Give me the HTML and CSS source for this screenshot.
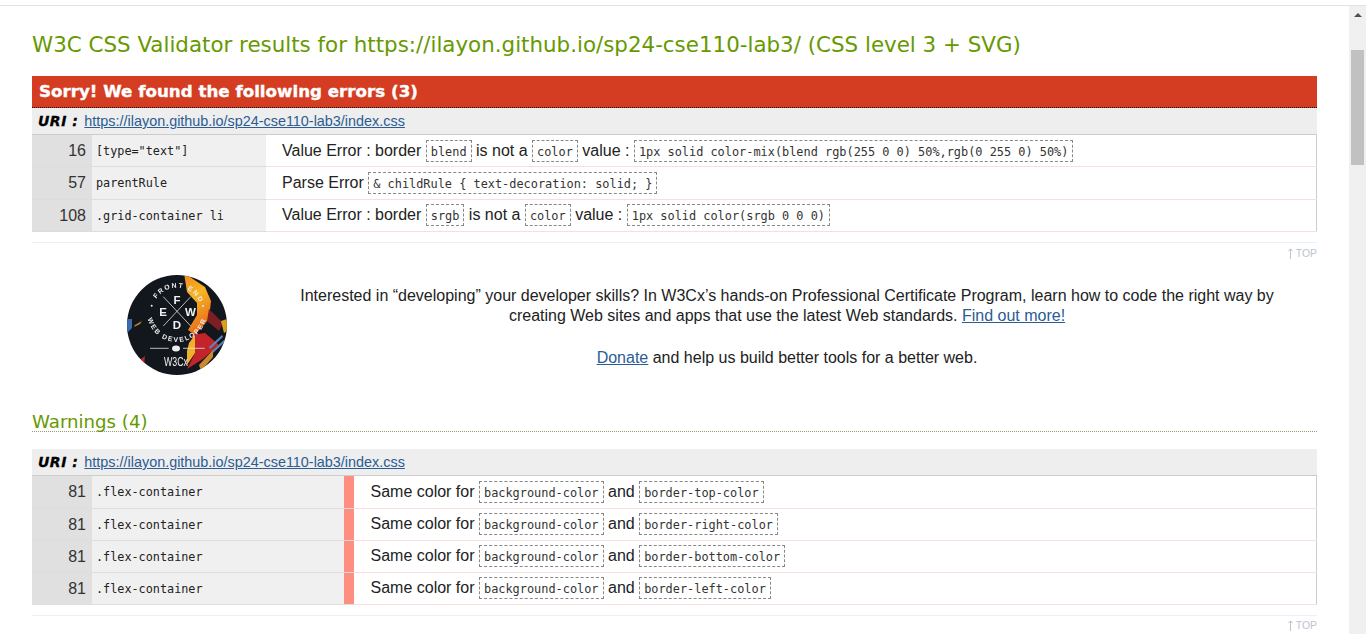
FILE: index.html
```html
<!DOCTYPE html>
<html lang="en">
<head>
<meta charset="utf-8">
<title>W3C CSS Validator results</title>
<link rel="stylesheet" href="styles.css">
</head>
<body>
<div class="topline"></div>
<main class="page">
  <h2 class="title">W3C CSS Validator results for https://ilayon.github.io/sp24-cse110-lab3/ (CSS level 3 + SVG)</h2>
  <h3 class="errbar">Sorry! We found the following errors (3)</h3>
  <div class="uri"><span class="urilabel">URI :</span> <a href="#">https://ilayon.github.io/sp24-cse110-lab3/index.css</a></div>
  <table class="report errors">
    <tr class="r1"><td class="ln">16</td><td class="ctx">[type="text"]</td><td class="msg">Value Error : border <code>blend</code> is not a <code>color</code> value : <code>1px solid color-mix(blend rgb(255 0 0) 50%,rgb(0 255 0) 50%)</code></td></tr>
    <tr class="r2"><td class="ln">57</td><td class="ctx">parentRule</td><td class="msg">Parse Error <code>&amp; childRule { text-decoration: solid; }</code></td></tr>
    <tr class="r3"><td class="ln">108</td><td class="ctx">.grid-container li</td><td class="msg">Value Error : border <code>srgb</code> is not a <code>color</code> value : <code>1px solid color(srgb 0 0 0)</code></td></tr>
  </table>
  <div class="toprule"></div>
  <div class="toplink"><svg class="arrow" viewBox="0 0 5 11" width="5" height="11"><path d="M2.5 11V1M.5 3.2 2.5 .8 4.5 3.2" fill="none" stroke="#b5c5d3" stroke-width="1"/></svg> TOP</div>
  <section class="promo">
    <svg class="logo" viewBox="0 0 100 100" width="100" height="100" aria-label="W3Cx Front End Web Developer">
      <defs>
        <clipPath id="disc"><circle cx="50" cy="50" r="50"/></clipPath>
        <linearGradient id="band" x1="0" y1="0" x2="0.3" y2="1">
          <stop offset="0" stop-color="#f08a1e"/>
          <stop offset=".45" stop-color="#f7b523"/>
          <stop offset="1" stop-color="#ea6d1c"/>
        </linearGradient>
      </defs>
      <g clip-path="url(#disc)">
        <rect width="100" height="100" fill="#12161d"/>
        <polygon points="57,-2 78,12 84,26 82,44 68,60 61,55 70,40 70,28 60,17" fill="url(#band)"/>
        <polygon points="82,34 96,48 92,56 80,46" fill="#7d1f22"/>
        <polygon points="65,60 78,58 92,70 76,84 60,94 68,78" fill="#c3232a"/>
        <polygon points="62,68 68,60 68,78 60,90 60,76" fill="#f2b02a"/>
        <polygon points="82,72 95,60 96,62 83,74" fill="#5a86b5"/>
        <polygon points="85,76 98,64 99,66 86,78" fill="#5a86b5"/>
        <polygon points="72,90 86,75 86,82 74,96" fill="#c98a2b"/>
        <polygon points="0,44 5,44 5,53 0,58" fill="#3c6cab"/>
        <polygon points="8,50 15,46 13,49 7,52" fill="#c98a2b"/>
        <polygon points="14,84 18,81 17,90" fill="#c3232a"/>
        <polygon points="94,46 100,44 100,56 97,58" fill="#d8a01f"/>
      </g>
      <g fill="none" stroke="#e4e4e4" stroke-width=".8">
        <path d="M36.3 21.7 63.7 51"/><path d="M63.7 21.7 36.3 51"/>
        <path d="M23 73.3H41.7"/><path d="M56 73.3H77.7"/>
      </g>
      <ellipse cx="49" cy="73.6" rx="4" ry="3" fill="#eee"/>
      <g class="lg-big">
        <text x="50" y="28.5" text-anchor="middle">F</text>
        <text x="36" y="41" text-anchor="middle">E</text>
        <text x="63.5" y="41" text-anchor="middle">W</text>
        <text x="50" y="54" text-anchor="middle">D</text>
      </g>
      <circle cx="24.7" cy="30.7" r="1" fill="#eee"/>
      <circle cx="76" cy="31" r="1" fill="#eee"/>
      <path id="arcTop" d="M26 42A24.5 24.5 0 1 1 74 42" fill="none"/>
      <path id="arcBot" d="M20.6 31A30 30 0 1 0 79.4 31" fill="none"/>
      <text class="lg-arc"><textPath href="#arcTop" startOffset="53%" text-anchor="middle">FRONT END</textPath></text>
      <text class="lg-arc"><textPath href="#arcBot" startOffset="50%" text-anchor="middle">WEB DEVELOPER</textPath></text>
      <text class="lg-x" x="37" y="91" textLength="24" lengthAdjust="spacingAndGlyphs">W3Cx</text>
    </svg>
    <div class="promotext">
      <p>Interested in “developing” your developer skills? In W3Cx’s hands-on Professional Certificate Program, learn how to code the right way by creating Web sites and apps that use the latest Web standards. <a href="#">Find out more!</a></p>
      <p class="donate"><a href="#">Donate</a> and help us build better tools for a better web.</p>
    </div>
  </section>
  <h3 class="warnhead">Warnings (4)</h3>
  <div class="uri uri-w"><span class="urilabel">URI :</span> <a href="#">https://ilayon.github.io/sp24-cse110-lab3/index.css</a></div>
  <table class="report warnings">
    <tr><td class="ln">81</td><td class="ctx">.flex-container</td><td class="lvl"></td><td class="msg">Same color for <code>background-color</code> and <code>border-top-color</code></td></tr>
    <tr><td class="ln">81</td><td class="ctx">.flex-container</td><td class="lvl"></td><td class="msg">Same color for <code>background-color</code> and <code>border-right-color</code></td></tr>
    <tr><td class="ln">81</td><td class="ctx">.flex-container</td><td class="lvl"></td><td class="msg">Same color for <code>background-color</code> and <code>border-bottom-color</code></td></tr>
    <tr><td class="ln">81</td><td class="ctx">.flex-container</td><td class="lvl"></td><td class="msg">Same color for <code>background-color</code> and <code>border-left-color</code></td></tr>
  </table>
  <div class="toprule toprule-w"></div>
  <div class="toplink toplink-w"><svg class="arrow" viewBox="0 0 5 11" width="5" height="11"><path d="M2.5 11V1M.5 3.2 2.5 .8 4.5 3.2" fill="none" stroke="#b5c5d3" stroke-width="1"/></svg> TOP</div>
</main>
<div class="scrollbar"><span class="sb-up"></span><span class="sb-thumb"></span></div>
</body>
</html>
```
FILE: styles.css
```css
html, body { margin: 0; padding: 0; height: 634px; overflow: hidden; background: #fff; }
body { font-family: "Liberation Sans", Arial, sans-serif; font-size: 16px; color: #222; }
.topline { height: 1px; margin-top: 5px; background: #e3e3e3; }
.page { width: 1285px; margin-left: 32px; }
.title { margin: 0; padding-top: 24px; height: 46px; font: 400 21.4px/30px "DejaVu Sans", Verdana, sans-serif; color: #669900; white-space: nowrap; }
.errbar { margin: 0; height: 31px; padding-left: 7px; background: #d43d22; color: #fff; border-bottom: 1px dotted #111; font: 700 16.7px/31px "DejaVu Sans", Verdana, sans-serif; -webkit-text-stroke: .4px #fff; }
.uri { height: 26px; padding-left: 6px; background: #eee; line-height: 26px; font-size: 14.4px; color: #000; white-space: nowrap; }
.urilabel { font: italic 700 14px/26px "DejaVu Sans", Verdana, sans-serif; letter-spacing: .5px; margin-right: 2px; -webkit-text-stroke: .3px #000; }
a { color: #2b5c94; text-decoration: underline; }
.report { width: 1285px; border-collapse: collapse; table-layout: fixed; border-right: 1px solid #ccc; }
.report td { padding: 0; border-bottom: 1px solid #ffdcdc; white-space: nowrap; vertical-align: middle; }
.report td.ln, .report td.ctx, .report td.lvl { border-bottom-color: #ddd; }
.report tr:first-child td { border-top: 1px solid #ccc; }
.ln { width: 54px; padding-right: 6px !important; background: #e0e0e0; text-align: right; color: #333; font-size: 16px; }
.ctx { background: #f0f0f0; padding-left: 4px !important; font: 11.8px "DejaVu Sans Mono", "Liberation Mono", monospace; color: #222; }
.errors .ctx { width: 170px; }
.warnings .ctx { width: 248px; }
.msg { color: #222; line-height: 20px; }
.errors .msg { padding-left: 16px !important; }
.warnings .msg { padding-left: 16.5px !important; }
.lvl { width: 10px; background: #fd8e80 !important; }
.errors tr td { height: 31px; }
.errors tr.r2 td { height: 32px; }
.errors tr.r1 td.msg { height: 30px; padding-top: 1px; }
.errors tr.r3 td.msg { height: 30px; padding-bottom: 1px; }
.warnings tr td { height: 31px; }
.warnings tr:first-child td { height: 32px; }
.warnings tr td.msg { height: 30px; padding-bottom: 1px; }
.warnings tr:first-child td.msg { height: 31px; }
code { display: inline-block; height: 20px; padding: 0 4px; margin: 0; border: 1px dashed #888; font: 11.9px/22px "DejaVu Sans Mono", "Liberation Mono", monospace; color: #333; }
.toprule { height: 1px; margin-top: 10px; background: #eeeefa; }
.toplink { height: 17px; margin-top: 3px; text-align: right; font-size: 10.4px; line-height: 16px; color: #b9c4d0; }
.toplink-w { margin-top: 2px; }
.arrow { vertical-align: -2px; }
.promo { display: flex; height: 140px; align-items: flex-start; padding-top: 9px; box-sizing: border-box; }
.logo { flex: none; margin-left: 95px; margin-top: 3px; display: block; filter: blur(.3px); }
.promotext { width: 990px; margin-left: 65px; padding-top: 14px; text-align: center; line-height: 20px; color: #222; }
.promotext p { margin: 0; }
.promotext .donate { margin-top: 22px; }
.lg-big text { font: 700 11.5px "Liberation Sans", sans-serif; fill: #f2f2f2; }
.lg-arc { font: 700 6.8px "Liberation Sans", sans-serif; fill: #eee; letter-spacing: 1.6px; }
.lg-x { font: 400 12.5px "Liberation Sans", sans-serif; fill: #f2f2f2; }
.warnhead { margin: 0; height: 28px; border-bottom: 1px dotted #9a9a6a; font: 400 18.15px/38px "DejaVu Sans", Verdana, sans-serif; color: #669900; }
.uri-w { margin-top: 17px; }
.scrollbar { position: absolute; top: 6px; right: 0; width: 17px; height: 628px; background: #f0f0f0; }
.sb-up { position: absolute; left: 5px; top: 7px; width: 0; height: 0; border-left: 4px solid transparent; border-right: 4px solid transparent; border-bottom: 4px solid #505050; }
.sb-thumb { position: absolute; left: 2px; top: 44px; width: 13px; height: 115px; background: #c1c1c1; }
```
